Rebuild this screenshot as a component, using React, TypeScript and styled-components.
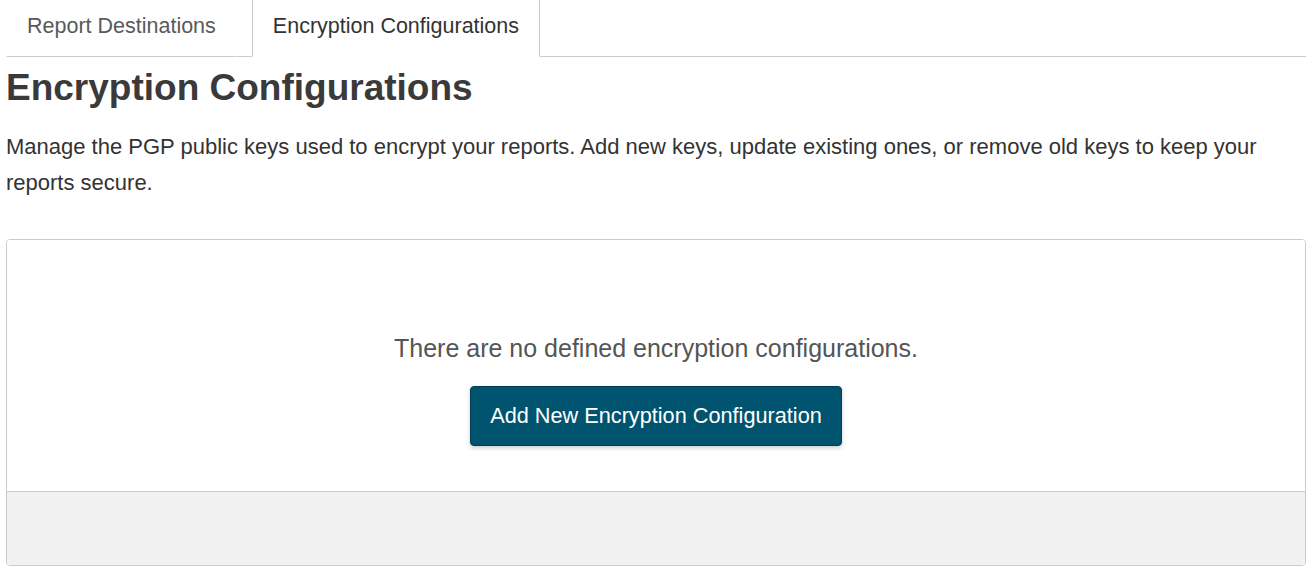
import React, { FC } from "react";
import styled, { createGlobalStyle } from "styled-components";

const GlobalStyle = createGlobalStyle`
  html, body {
    margin: 0;
    padding: 0;
    background: #ffffff;
    font-family: "Liberation Sans", Arial, sans-serif;
    color: #333333;
  }
`;

const Page = styled.div`
  padding: 0 6px;
`;

const TabBar = styled.div`
  display: flex;
  gap: 15px;
  height: 56px;
  border-bottom: 1px solid #cccccc;
`;

const Tab = styled.div<{ $active?: boolean }>`
  display: flex;
  align-items: center;
  padding: 0 20px 4px;
  margin-bottom: -1px;
  font-size: 21.5px;
  color: ${({ $active }) => ($active ? "#333333" : "#5a5a5a")};
  background: #ffffff;
  border: 1px solid ${({ $active }) => ($active ? "#cccccc" : "transparent")};
  border-top: none;
  border-bottom-color: ${({ $active }) => ($active ? "#ffffff" : "#cccccc")};
`;

const Title = styled.h1`
  margin: 8px 0 0;
  font-size: 37px;
  font-weight: bold;
  line-height: 46px;
  color: #3a3a3a;
`;

const Description = styled.p`
  margin: 18px 0 0;
  font-size: 22px;
  line-height: 36px;
  color: #333333;
`;

const Panel = styled.div`
  margin-top: 38px;
  border: 1px solid #cccccc;
  border-radius: 4px;
  overflow: hidden;
`;

const PanelBody = styled.div`
  display: flex;
  flex-direction: column;
  align-items: center;
  gap: 24px;
  padding: 94px 0 45px;
  background: #ffffff;
`;

const EmptyText = styled.div`
  font-size: 25px;
  line-height: 28px;
  color: #555555;
`;

const PrimaryButton = styled.button`
  height: 60px;
  padding: 0 19px;
  font-family: inherit;
  font-size: 21.7px;
  color: #ffffff;
  background: #00546f;
  border: 1px solid #003e55;
  border-radius: 4px;
  box-shadow: 0 2px 4px rgba(0, 0, 0, 0.2);
  cursor: pointer;
`;

const PanelFooter = styled.div`
  height: 73px;
  background: #f1f1f1;
  border-top: 1px solid #cccccc;
`;

const App: FC = () => {
  return (
    <Page>
      <GlobalStyle />
      <TabBar>
        <Tab>Report Destinations</Tab>
        <Tab $active>Encryption Configurations</Tab>
      </TabBar>
      <Title>Encryption Configurations</Title>
      <Description>
        Manage the PGP public keys used to encrypt your reports. Add new keys,
        update existing ones, or remove old keys to keep your reports secure.
      </Description>
      <Panel>
        <PanelBody>
          <EmptyText>There are no defined encryption configurations.</EmptyText>
          <PrimaryButton>Add New Encryption Configuration</PrimaryButton>
        </PanelBody>
        <PanelFooter />
      </Panel>
    </Page>
  );
};

export default App;
